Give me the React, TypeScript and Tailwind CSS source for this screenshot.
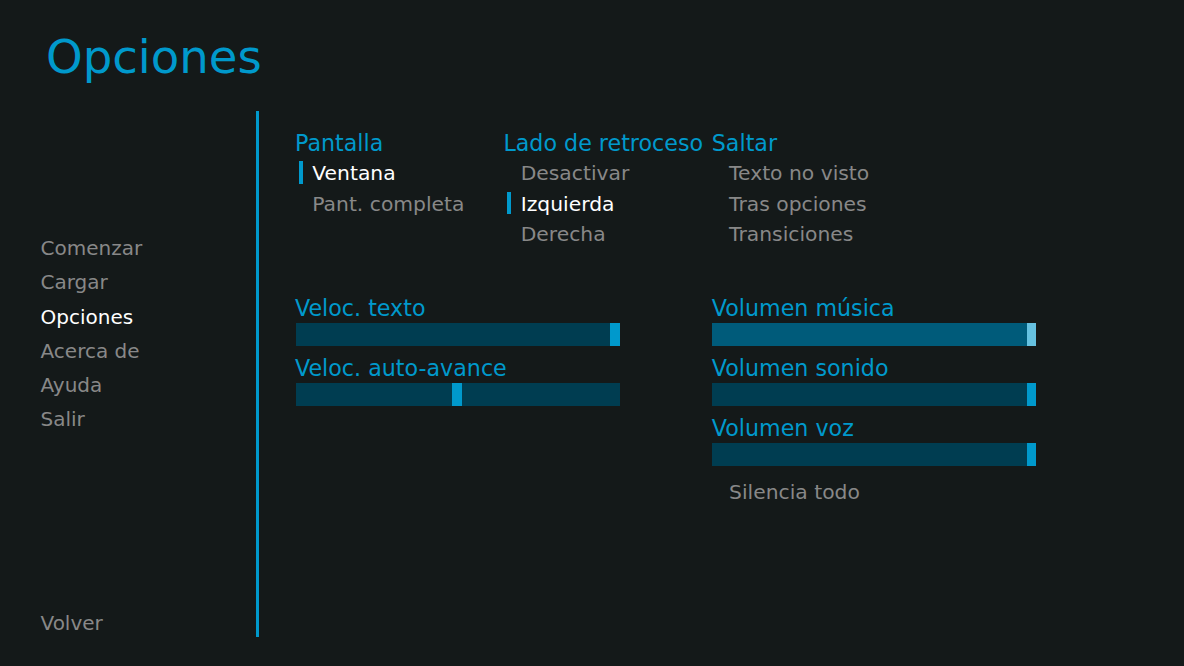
import React from "react";

const BLUE = "text-[#0099cc]";

function RadioItem({ text, selected }: { text: string; selected?: boolean }) {
  return (
    <div className="flex h-[30.33px] items-start">
      <div
        className={
          "ml-[4px] mt-[3px] h-[22.5px] w-[4px] " +
          (selected ? "bg-[#0099cc]" : "bg-transparent")
        }
      />
      <span
        className={
          "ml-[9.3px] whitespace-nowrap text-[20.3px] leading-[30.33px] " +
          (selected ? "text-white" : "text-[#888888]")
        }
      >
        {text}
      </span>
    </div>
  );
}

function PrefLabel({ text }: { text: string }) {
  return (
    <div className={"h-[30px] whitespace-nowrap text-[22.2px] leading-[30px] " + BLUE}>
      {text}
    </div>
  );
}

function RadioGroup({
  label,
  items,
  selected,
}: {
  label: string;
  items: string[];
  selected?: number;
}) {
  return (
    <div className="w-[208.4px] shrink-0">
      <PrefLabel text={label} />
      {items.map((t, i) => (
        <RadioItem key={t} text={t} selected={i === selected} />
      ))}
    </div>
  );
}

function Slider({
  label,
  offset,
  hover,
  thumb = 10,
  first,
  shift,
}: {
  label: string;
  offset: number | "end";
  hover?: boolean;
  thumb?: number;
  first?: boolean;
  shift?: boolean;
}) {
  return (
    <div className={first ? "" : "mt-[7px]"}>
      <PrefLabel text={label} />
      <div
        className={
          "flex h-[23px] w-[324px] " +
          (shift ? "ml-[1px] " : "") +
          (offset === "end" ? "justify-end " : "") +
          (hover ? "bg-[#005b7a]" : "bg-[#003d51]")
        }
      >
        {offset !== "end" && <div style={{ width: offset }} />}
        <div
          className={"h-full " + (hover ? "bg-[#66c1e0]" : "bg-[#0099cc]")}
          style={{ width: thumb }}
        />
      </div>
    </div>
  );
}

function NavItem({ text, active }: { text: string; active?: boolean }) {
  return (
    <div
      className={
        "h-[34.3px] text-[20px] leading-[34.3px] " +
        (active ? "text-white" : "text-[#888888]")
      }
    >
      {text}
    </div>
  );
}

export default function App() {
  return (
    <div
      className="flex h-[666px] w-[1184px] flex-col overflow-hidden bg-[#141919]"
      style={{ fontFamily: "'DejaVu Sans', sans-serif" }}
    >
      <div className={"h-[111px] pl-[46px] pt-[34px] text-[46.6px] leading-[46px] " + BLUE}>
        Opciones
      </div>
      <div className="flex h-[526px]">
        <nav className="flex w-[256px] flex-col pl-[40.5px] pt-[120px]">
          <NavItem text="Comenzar" />
          <NavItem text="Cargar" />
          <NavItem text="Opciones" active />
          <NavItem text="Acerca de" />
          <NavItem text="Ayuda" />
          <NavItem text="Salir" />
          <div className="mt-[169px]">
            <NavItem text="Volver" />
          </div>
        </nav>
        <div className="w-[3px] bg-[#0099cc]" />
        <main className="pl-[36px] pt-[17.4px]">
          <div className="flex">
            <RadioGroup label="Pantalla" items={["Ventana", "Pant. completa"]} selected={0} />
            <RadioGroup
              label="Lado de retroceso"
              items={["Desactivar", "Izquierda", "Derecha"]}
              selected={1}
            />
            <RadioGroup label="Saltar" items={["Texto no visto", "Tras opciones", "Transiciones"]} />
          </div>
          <div className="mt-[43.7px] flex">
            <div className="w-[416.8px] shrink-0">
              <Slider label="Veloc. texto" offset="end" first shift />
              <Slider label="Veloc. auto-avance" offset={156} shift />
            </div>
            <div className="w-[416.8px] shrink-0">
              <Slider label="Volumen música" offset="end" hover thumb={9} first />
              <Slider label="Volumen sonido" offset="end" thumb={9} />
              <Slider label="Volumen voz" offset="end" thumb={9} />
              <div className="mt-[10.5px]">
                <RadioItem text="Silencia todo" />
              </div>
            </div>
          </div>
        </main>
      </div>
    </div>
  );
}
